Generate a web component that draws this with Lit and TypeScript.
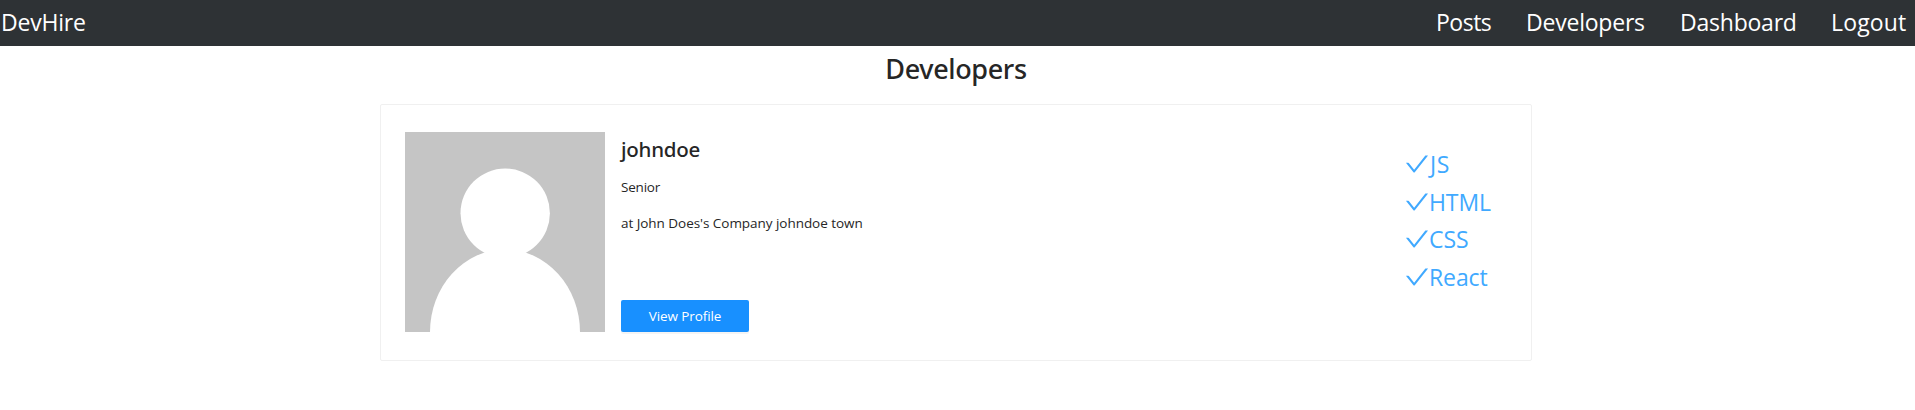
import { LitElement, html, css } from "lit";

const SKILLS = ["JS", "HTML", "CSS", "React"];

class AppRoot extends LitElement {
  static styles = css`
    :host {
      display: block;
      height: 410px;
      background: #fff;
      color: #262626;
      font-family: "Open Sans", "Noto Sans", sans-serif;
    }
    .bar {
      display: flex;
      justify-content: space-between;
      box-sizing: border-box;
      height: 46px;
      background: #2e3235;
      color: #fff;
      font-size: 23px;
      line-height: 44px;
    }
    .brand { padding-left: 1px; letter-spacing: -0.2px; }
    .nav { display: grid; grid-template-columns: 90px 154px 151px 84px; letter-spacing: -0.22px; white-space: nowrap; }
    .posts { letter-spacing: -0.5px; }
    .logout { letter-spacing: 0.15px; }
    .title {
      margin: 0 0 13px;
      padding-right: 3px;
      text-align: center;
      font: 500 27px/45px "Noto Sans", sans-serif;
      letter-spacing: -0.36px;
    }
    .card {
      display: flex;
      box-sizing: border-box;
      width: 1152px;
      height: 257px;
      margin-left: 380px;
      padding: 27px 24px;
      border: 1px solid #f0f0f0;
      border-radius: 2px;
    }
    .avatar { display: block; width: 200px; height: 200px; flex: none; }
    .info {
      display: flex;
      flex-direction: column;
      align-items: flex-start;
      flex: 1;
      height: 200px;
      padding-left: 16px;
      font-size: 13.5px;
      line-height: 22px;
      letter-spacing: -0.04px;
    }
    .name {
      margin: 3px 0 13px;
      font: 500 20.5px/28px "Noto Sans", sans-serif;
      letter-spacing: -0.25px;
    }
    .line { margin: 0 0 14px; }
    .level { letter-spacing: -0.2px; }
    .button {
      width: 128px;
      height: 32px;
      margin-top: auto;
      padding: 0;
      border: 0;
      border-radius: 2px;
      background: #1890ff;
      box-shadow: 0 2px 0 rgba(0, 0, 0, 0.045);
      color: #fff;
      font: 13.5px/31px "Open Sans", sans-serif;
      letter-spacing: -0.1px;
    }
    .skills {
      width: 102px;
      margin: 13px 0 0;
      padding: 0;
      list-style: none;
      color: #40a9ff;
      font-size: 23px;
      line-height: 37.7px;
    }
    .skill { display: flex; align-items: center; height: 37.7px; }
    .check { width: 24px; height: 24px; flex: none; }
    .label { padding-top: 2px; letter-spacing: -0.1px; }
    .skill:first-child .label { padding-left: 1px; letter-spacing: 0.5px; }
  `;

  render() {
    return html`
      <header class="bar">
        <div class="brand">DevHire</div>
        <nav class="nav">
          <span class="posts">Posts</span><span>Developers</span><span>Dashboard</span><span class="logout">Logout</span>
        </nav>
      </header>
      <h2 class="title">Developers</h2>
      <section class="card">
        <svg class="avatar" viewBox="0 0 200 200">
          <rect width="200" height="200" fill="#c5c5c5" />
          <circle cx="100.2" cy="81.2" r="44.7" fill="#fff" />
          <ellipse cx="100" cy="200" rx="75" ry="82.5" fill="#fff" />
        </svg>
        <div class="info">
          <h3 class="name">johndoe</h3>
          <p class="line level">Senior</p>
          <p class="line">at John Does's Company johndoe town</p>
          <button class="button">View Profile</button>
        </div>
        <ul class="skills">
          ${SKILLS.map(
            (skill) => html`<li class="skill">
              <svg class="check" viewBox="64 64 896 896" fill="currentColor">
                <path d="M912 190h-69.9c-9.8 0-19.1 4.5-25.1 12.2L404.7 724.5 207 474a32 32 0 00-25.1-12.2H112c-6.7 0-10.4 7.7-6.3 12.9l273.9 347c12.8 16.2 37.4 16.2 50.3 0l488.4-618.9c4.1-5.1.4-12.8-6.3-12.8z" />
              </svg><span class="label">${skill}</span>
            </li>`
          )}
        </ul>
      </section>
    `;
  }
}
customElements.define("app-root", AppRoot);
